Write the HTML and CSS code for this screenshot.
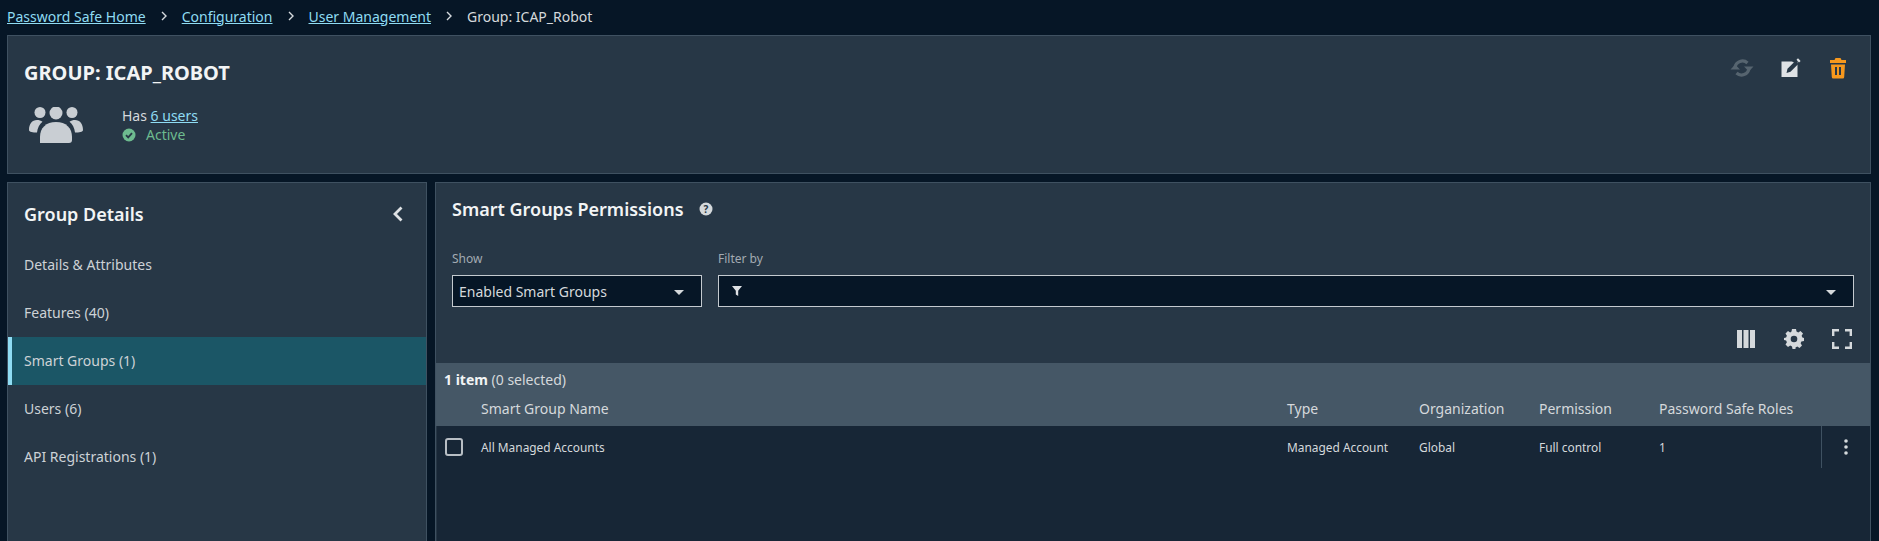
FILE: index.html
```html
<!DOCTYPE html>
<html lang="en">
<head>
    <meta charset="UTF-8">
    <title>Group: ICAP_Robot</title>
    <link rel="stylesheet" href="styles.css">
</head>
<body>
<nav class="crumbs">
    <a href="#">Password Safe Home</a>
    <svg class="crumb-sep" viewBox="0 0 8 10"><path d="M2 1l4 4-4 4" fill="none" stroke="#d5dade" stroke-width="1.4"/></svg>
    <a href="#">Configuration</a>
    <svg class="crumb-sep" viewBox="0 0 8 10"><path d="M2 1l4 4-4 4" fill="none" stroke="#d5dade" stroke-width="1.4"/></svg>
    <a href="#">User Management</a>
    <svg class="crumb-sep" viewBox="0 0 8 10"><path d="M2 1l4 4-4 4" fill="none" stroke="#d5dade" stroke-width="1.4"/></svg>
    <span>Group: ICAP_Robot</span>
</nav>

<header class="panel group-head">
    <div class="group-main">
        <h1>GROUP: ICAP_ROBOT</h1>
        <div class="group-info">
            <svg class="users-icon" viewBox="0 0 54 36" fill="#c9ced3">
                <circle cx="11" cy="5.5" r="5.5"/>
                <circle cx="27" cy="6" r="6.5"/>
                <circle cx="43" cy="5.5" r="5.5"/>
                <path d="M0 23c0-6 3-10 8-10 2 0 4 .6 5.500 1.800-3 2.600-5 6-5.500 10.700C4 25.500 0 25 0 23z"/>
                <path d="M54 23c0-6-3-10-8-10-2 0-4 .6-5.500 1.800 3 2.600 5 6 5.500 10.700 4 0 8-.5 8-2.500z"/>
                <path d="M11 36v-6c0-9 6-15 16-15s16 6 16 15v3c0 2-1 3-3 3H11z"/>
            </svg>
            <div class="group-text">
                <div>Has <a href="#">6 users</a></div>
                <div class="status">
                    <svg viewBox="0 0 14 14"><circle cx="7" cy="7" r="6.500" fill="#6dbb8f"/><path d="M4 7.200l2.200 2.200L10 5.200" fill="none" stroke="#273746" stroke-width="1.800"/></svg>
                    <span>Active</span>
                </div>
            </div>
        </div>
    </div>
    <div class="head-actions">
        <svg viewBox="0 0 24 24"><path d="M5 11.500A7.500 7.500 0 0 1 17.500 7M19 12.500A7.500 7.500 0 0 1 6.500 17" fill="none" stroke="#56646f" stroke-width="3.200"/><path d="M14 10.500h9.500L18.800 15.500zM.5 13.500H10L5.200 8.500z" fill="#56646f"/></svg>
        <svg viewBox="0 0 24 24"><path d="M3.500 5.500h16v15.500h-16z" fill="#dfe2e5"/><path d="M14 5.500l5.500-3v6z" fill="#273746"/><path d="M8.500 17l1-4.200L17.300 5l3 3-7.800 7.800z" fill="#273746"/><path d="M18.500 3.800l1.500-1.500 2.600 2.600L21 6.500z" fill="#dfe2e5"/></svg>
        <svg viewBox="0 0 24 24" fill="#f7981d"><path d="M9.500 2h5l1 2h4.500v3H4V4h4.500z"/><path d="M5 8.500h14l-.8 12.500a1.500 1.500 0 0 1-1.500 1.500H7.300A1.500 1.500 0 0 1 5.800 21z"/><path d="M9 11h2v8H9zM13 11h2v8h-2z" fill="#273746"/></svg>
    </div>
</header>

<div class="columns">
    <aside class="panel side">
        <div class="side-title">
            <h2>Group Details</h2>
            <svg viewBox="0 0 12 16"><path d="M9.500 1.500L3 8l6.500 6.500" fill="none" stroke="#dfe2e5" stroke-width="2.800"/></svg>
        </div>
        <a class="side-item" href="#">Details &amp; Attributes</a>
        <a class="side-item" href="#">Features (40)</a>
        <a class="side-item active" href="#">Smart Groups (1)</a>
        <a class="side-item" href="#">Users (6)</a>
        <a class="side-item" href="#">API Registrations (1)</a>
    </aside>

    <main class="panel content">
        <div class="content-title">
            <h2>Smart Groups Permissions</h2>
            <svg viewBox="0 0 14 14"><circle cx="7" cy="7" r="6.500" fill="#d5d9dc"/><text x="7" y="10.500" text-anchor="middle" class="help-mark">?</text></svg>
        </div>

        <div class="filters">
            <div class="field show-field">
                <label>Show</label>
                <div class="select">
                    <span>Enabled Smart Groups</span>
                    <i class="caret"></i>
                </div>
            </div>
            <div class="field filter-field">
                <label>Filter by</label>
                <div class="select">
                    <svg class="funnel" viewBox="0 0 10 10"><path d="M0 0h10L6.200 4.800V10L3.800 8.500V4.800z" fill="#dfe2e5"/></svg>
                    <i class="caret"></i>
                </div>
            </div>
        </div>

        <div class="tools">
            <svg viewBox="0 0 20 20" fill="#d5d9dc"><path d="M1 1h5v18H1zM7.500 1h5v18h-5zM14 1h5v18h-5z"/></svg>
            <svg viewBox="0 0 20 20"><path d="M8 0h4l.5 2.600 1.800.8L16.500 2 19 4.500l-1.400 2.200.8 1.800L20 9v3l-2.600.5-.8 1.800 1.400 2.200-2.500 2.500-2.200-1.400-1.800.8L11.500 20h-3L8 17.400l-1.800-.8L4 18l-2.500-2.500 1.400-2.200-.8-1.800L0 11V9l2.100-.5.8-1.800L1.500 4.500 4 2l2.200 1.400 1.300-.8z" fill="#d5d9dc"/><circle cx="10" cy="10" r="3.300" fill="#273746"/></svg>
            <svg viewBox="0 0 20 20" fill="none" stroke="#d5d9dc" stroke-width="2.400"><path d="M7 1.200H1.200V7M13 1.200h5.800V7M7 18.800H1.200V13M13 18.800h5.800V13"/></svg>
        </div>

        <div class="table-head">
            <div class="count"><b>1 item</b> (0 selected)</div>
            <div class="row-grid heads">
                <span></span>
                <span>Smart Group Name</span>
                <span>Type</span>
                <span>Organization</span>
                <span>Permission</span>
                <span>Password Safe Roles</span>
                <span></span>
            </div>
        </div>
        <div class="table-body">
            <div class="row-grid data-row">
                <span><i class="check"></i></span>
                <span>All Managed Accounts</span>
                <span>Managed Account</span>
                <span>Global</span>
                <span>Full control</span>
                <span>1</span>
                <span class="row-menu"><svg viewBox="0 0 4 16" fill="#d5d9dc"><circle cx="2" cy="2" r="1.800"/><circle cx="2" cy="8" r="1.800"/><circle cx="2" cy="14" r="1.800"/></svg></span>
            </div>
        </div>
    </main>
</div>
</body>
</html>
```

FILE: styles.css
```css
html, body {
    margin: 0;
    padding: 0;
}

html {
    height: 100%;
    overflow: hidden;
}

body {
    display: flex;
    flex-direction: column;
    height: 100%;
    overflow: hidden;
    padding: 0 8px 0 7px;
    box-sizing: border-box;
    background: #061626;
    color: #d5d9dc;
    font-family: "Noto Sans", "Open Sans", sans-serif;
    font-size: 14px;
}

a {
    color: #8fdcf3;
}

h1, h2 {
    margin: 0;
    color: #f2f4f5;
}

.panel {
    background: #273746;
    border: 1px solid #3f5161;
    box-sizing: border-box;
}

.crumbs {
    display: flex;
    flex: none;
    align-items: center;
    height: 35px;
    padding-bottom: 3px;
    box-sizing: border-box;
}

.crumb-sep {
    width: 8px;
    height: 10px;
    margin: 0 14px;
}

.group-head {
    display: flex;
    flex: none;
    justify-content: space-between;
    height: 139px;
    padding: 0 20px 0 16px;
}

.group-head h1 {
    margin-top: 23px;
    font-size: 20px;
    font-weight: 700;
    line-height: 27px;
}

.group-info {
    display: flex;
    align-items: center;
    margin-top: 20px;
    padding-left: 5px;
}

.users-icon {
    width: 54px;
    height: 36px;
    margin-right: 39px;
}

.group-text {
    line-height: 19px;
}

.status {
    display: flex;
    align-items: center;
    color: #6dbb8f;
}

.status svg {
    width: 14px;
    height: 14px;
    margin-right: 10px;
}

.head-actions {
    display: flex;
    gap: 24px;
    padding-top: 20px;
}

.head-actions svg {
    width: 24px;
    height: 24px;
}

.columns {
    display: flex;
    flex: 1;
    gap: 8px;
    min-height: 0;
    margin-top: 8px;
}

.side {
    width: 420px;
    flex: none;
    border-bottom: none;
}

.side-title {
    display: flex;
    justify-content: space-between;
    align-items: center;
    height: 58px;
    padding: 4px 22px 0 16px;
    box-sizing: border-box;
}

.side-title h2 {
    font-size: 18px;
    font-weight: 600;
}

.side-title svg {
    width: 12px;
    height: 16px;
}

.side-item {
    display: flex;
    align-items: center;
    height: 48px;
    padding: 0 0 1px 16px;
    box-sizing: border-box;
    color: #cdd2d6;
    text-decoration: none;
}

.side-item.active {
    padding-left: 12px;
    background: #1b5666;
    border-left: 4px solid #8fdcf3;
}

.content {
    display: flex;
    flex: 1;
    flex-direction: column;
    min-width: 0;
    border-bottom: none;
}

.content-title {
    display: flex;
    flex: none;
    align-items: center;
    gap: 15px;
    height: 55px;
    padding: 0 0 3px 16px;
    box-sizing: border-box;
}

.content-title h2 {
    font-size: 18px;
    font-weight: 600;
}

.content-title svg {
    width: 14px;
    height: 14px;
}

.help-mark {
    fill: #273746;
    font-size: 10px;
    font-weight: 700;
}

.filters {
    display: flex;
    flex: none;
    gap: 16px;
    padding: 13px 16px 0 16px;
}

.field label {
    display: block;
    height: 24px;
    color: #a3abb2;
    font-size: 12px;
    line-height: 16px;
}

.show-field {
    width: 250px;
    flex: none;
}

.filter-field {
    flex: 1;
}

.select {
    display: flex;
    align-items: center;
    justify-content: space-between;
    height: 32px;
    padding: 0 17px 0 6px;
    box-sizing: border-box;
    background: #061626;
    border: 1px solid #c4cacf;
}

.funnel {
    width: 10px;
    height: 10px;
    margin-left: 7px;
}

.caret {
    width: 0;
    height: 0;
    border-left: 5px solid transparent;
    border-right: 5px solid transparent;
    border-top: 5px solid #d5d9dc;
    margin-top: 2px;
}

.tools {
    display: flex;
    flex: none;
    justify-content: flex-end;
    gap: 28px;
    height: 56px;
    padding: 22px 18px 0 0;
    box-sizing: border-box;
}

.tools svg {
    width: 20px;
    height: 20px;
}

.table-head {
    flex: none;
    height: 63px;
    background: #455766;
}

.count {
    height: 34px;
    padding-left: 8px;
    line-height: 33px;
}

.count b {
    color: #f2f4f5;
}

.row-grid {
    display: grid;
    grid-template-columns: 45px 806px 132px 120px 120px 162px 1fr;
    align-items: center;
}

.heads {
    height: 22px;
}

.table-body {
    flex: 1;
    margin-left: 1px;
    background: #172636;
}

.data-row {
    grid-template-columns: 44px 806px 132px 120px 120px 162px 1fr;
    height: 42px;
    font-size: 11.9px;
}

.check {
    display: block;
    width: 14px;
    height: 14px;
    margin-left: 8px;
    border: 2px solid #b8bec4;
    border-radius: 3px;
}

.row-menu {
    display: flex;
    align-items: center;
    justify-content: center;
    height: 42px;
    border-left: 1px solid #3f5161;
}

.row-menu svg {
    width: 4px;
    height: 16px;
}
```
